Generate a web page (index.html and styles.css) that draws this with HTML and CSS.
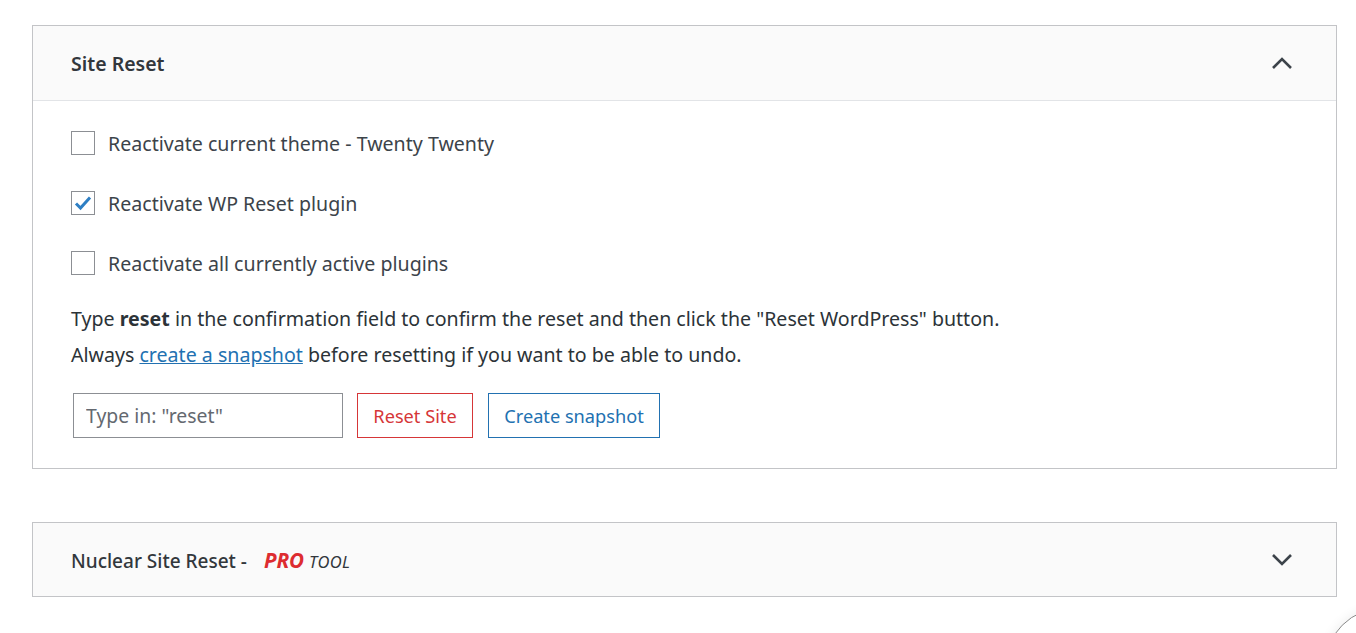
FILE: index.html
```html
<!DOCTYPE html>
<html lang="en">
<head>
<meta charset="utf-8">
<title>WP Reset</title>
<link rel="stylesheet" href="styles.css">
</head>
<body>
<main class="page">
  <section class="card">
    <header class="card-head">
      <h2 class="card-title">Site Reset</h2>
      <svg class="chev" width="22" height="14" viewBox="0 0 22 14"><path d="M2 12 L11 3 L20 12" fill="none" stroke="#3c434a" stroke-width="2.6"/></svg>
    </header>
    <div class="card-body">
      <label class="opt"><span class="box"></span><span>Reactivate current theme - Twenty Twenty</span></label>
      <label class="opt"><span class="box"><svg width="18" height="16" viewBox="0 0 18 16"><path d="M2 8.5 L6.5 13 L16 2.5" fill="none" stroke="#2e7fc4" stroke-width="3"/></svg></span><span>Reactivate WP Reset plugin</span></label>
      <label class="opt"><span class="box"></span><span>Reactivate all currently active plugins</span></label>
      <p class="note">Type <b>reset</b> in the confirmation field to confirm the reset and then click the "Reset WordPress" button.<br>Always <a href="#" class="link">create a snapshot</a> before resetting if you want to be able to undo.</p>
      <div class="actions">
        <input class="confirm" type="text" placeholder="Type in: &quot;reset&quot;">
        <button class="btn btn-red">Reset Site</button>
        <button class="btn btn-blue">Create snapshot</button>
      </div>
    </div>
  </section>

  <section class="card card-closed">
    <header class="card-head">
      <h2 class="card-title">Nuclear Site Reset - <span class="pro">PRO</span> <span class="tool">tool</span></h2>
      <svg class="chev" width="22" height="14" viewBox="0 0 22 14"><path d="M2 2 L11 11 L20 2" fill="none" stroke="#3c434a" stroke-width="2.6"/></svg>
    </header>
  </section>
</main>
<div class="corner"><div class="fab"></div></div>
</body>
</html>
```
FILE: styles.css
```css
html, body {
  margin: 0;
  padding: 0;
  background: #ffffff;
}
body {
  font-family: "Noto Sans", "Open Sans", sans-serif;
  color: #3c434a;
  overflow: hidden;
  height: 633px;
  position: relative;
}
.page {
  padding: 25px 19px 0 32px;
  display: flex;
  flex-direction: column;
  gap: 53px;
}
.card {
  border: 1px solid #c3c4c7;
  background: #fff;
  width: 1303px;
}
.card-head {
  height: 74px;
  background: #fafafa;
  border-bottom: 1px solid #e2e4e7;
  display: flex;
  align-items: center;
  justify-content: space-between;
  padding: 0 43px 0 38px;
}
.card-closed .card-head {
  height: 73px;
  border-bottom: 0;
}
.card-title {
  margin: 0;
  font-size: 19.5px;
  font-weight: 600;
  color: #32373c;
}
.card-closed .card-title {
  font-weight: 500;
  font-size: 19px;
}
.pro {
  color: #dd2c30;
  font-weight: 700;
  font-style: italic;
  font-size: 20.5px;
  margin-left: 12px;
}
.tool {
  font-style: italic;
  font-weight: 400;
  text-transform: uppercase;
  font-size: 16.5px;
  letter-spacing: 0.4px;
}
.chev {
  display: block;
}
.card-body {
  padding: 30px 38px 30px 38px;
}
.opt {
  display: flex;
  align-items: center;
  gap: 13px;
  font-size: 19.6px;
  height: 24px;
  margin-bottom: 36px;
}
.opt:nth-of-type(3) {
  margin-bottom: 26px;
}
.box {
  width: 22px;
  height: 22px;
  border: 1px solid #8c8f94;
  background: #fff;
  display: flex;
  align-items: center;
  justify-content: center;
  flex: none;
}
.note {
  margin: 0;
  font-size: 19.6px;
  line-height: 36px;
  color: #2c3338;
}
.note b {
  font-weight: 700;
}
.link {
  color: #2271b1;
  text-decoration: underline;
}
.actions {
  margin-top: 20px;
  display: flex;
  align-items: center;
  padding-left: 2px;
}
.confirm {
  width: 270px;
  height: 45px;
  box-sizing: border-box;
  border: 1px solid #8c8f94;
  border-radius: 0;
  padding: 0 12px;
  font-family: inherit;
  font-size: 19.4px;
  color: #3c434a;
  margin-right: 14px;
}
.confirm::placeholder {
  color: #646970;
}
.btn {
  height: 45px;
  box-sizing: border-box;
  background: #fff;
  border-radius: 0;
  font-family: inherit;
  font-size: 18.2px;
  padding: 0;
  cursor: pointer;
}
.btn-red {
  border: 1px solid #d63638;
  color: #d63638;
  width: 116px;
  margin-right: 15px;
}
.btn-blue {
  border: 1px solid #2271b1;
  color: #2271b1;
  width: 172px;
}
.corner {
  position: absolute;
  right: 0;
  bottom: 0;
  width: 40px;
  height: 40px;
  overflow: hidden;
}
.fab {
  position: absolute;
  left: 8px;
  top: 14px;
  width: 120px;
  height: 120px;
  border-radius: 50%;
  border: 1px solid #8a8a8a;
  box-shadow: 0 0 12px rgba(0,0,0,0.08);
  background: #fff;
}
```
